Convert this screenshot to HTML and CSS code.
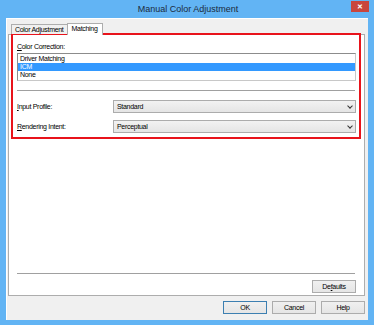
FILE: index.html
```html
<!DOCTYPE html>
<html lang="en">
<head>
    <meta charset="UTF-8">
    <title>Manual Color Adjustment</title>
    <link rel="stylesheet" href="styles.css">
</head>
<body>
    <div class="window">
        <div class="titlebar">
            <span class="title">Manual Color Adjustment</span>
            <span class="close">&#x2715;</span>
        </div>
        <div class="client">
            <div class="tabs">
                <div class="tab">Color Adjustment</div>
                <div class="tab active">Matching</div>
            </div>
            <div class="panel">
                <div class="label"><u>C</u>olor Correction:</div>
                <div class="listbox">
                    <div class="item">Driver Matching</div>
                    <div class="item selected">ICM</div>
                    <div class="item">None</div>
                </div>
                <div class="sep"></div>
                <div class="row">
                    <span class="row-label"><u>I</u>nput Profile:</span>
                    <div class="combo">Standard<span class="arrow"></span></div>
                </div>
                <div class="row">
                    <span class="row-label"><u>R</u>endering Intent:</span>
                    <div class="combo">Perceptual<span class="arrow"></span></div>
                </div>
                <div class="spacer"></div>
                <div class="sep"></div>
                <div class="panel-buttons">
                    <button class="btn">De<u>f</u>aults</button>
                </div>
                <div class="highlight"></div>
            </div>
            <div class="buttons">
                <button class="btn default">OK</button>
                <button class="btn">Cancel</button>
                <button class="btn">Help</button>
            </div>
        </div>
    </div>
</body>
</html>
```

FILE: styles.css
```css
body {
    margin: 0;
    font-family: 'Liberation Sans', Arial, sans-serif;
    font-size: 7px;
    letter-spacing: -0.3px;
    color: #000;
}
.window {
    width: 374px;
    height: 325px;
    box-sizing: border-box;
    background: #62b4f4;
    padding: 0 6px 5px 6px;
    display: flex;
    flex-direction: column;
}
.titlebar {
    height: 18px;
    position: relative;
    display: flex;
    justify-content: center;
    align-items: center;
}
.title {
    font-size: 9px;
    letter-spacing: 0;
    color: #1b2b3c;
    margin-left: 2px;
}
.close {
    position: absolute;
    right: -1px;
    top: 1px;
    width: 18px;
    height: 11px;
    background: #c9453d;
    color: #fff;
    font-size: 7px;
    font-weight: bold;
    line-height: 11px;
    text-align: center;
}
.client {
    flex: 1;
    background: #f0f0f0;
    border-left: 1px solid #fff;
    border-top: 1px solid #fff;
    padding: 3px 3px 0 1px;
    display: flex;
    flex-direction: column;
}
.tabs {
    display: flex;
    align-items: flex-end;
    padding-left: 3px;
    height: 12px;
    position: relative;
    z-index: 1;
}
.tab {
    border: 1px solid #adadad;
    border-bottom: none;
    background: #f0f0f0;
    height: 9px;
    line-height: 10px;
    padding: 0 3px;
    margin-right: -1px;
}
.tab.active {
    background: #fff;
    height: 11px;
    line-height: 10px;
    padding: 0 4px;
    margin-bottom: -1px;
}
.panel {
    flex: 1;
    background: #fff;
    border: 1px solid #adadad;
    padding: 7px 8px 2px 8px;
    display: flex;
    flex-direction: column;
    position: relative;
}
.label {
    height: 9px;
    line-height: 9px;
}
.listbox {
    margin-top: 2px;
    border: 1px solid #8c8c8c;
    border-right-color: #c8c8c8;
    border-bottom-color: #c8c8c8;
    padding: 1px 0;
}
.item {
    height: 8px;
    line-height: 8px;
    padding-left: 2px;
}
.item.selected {
    background: #3399ff;
    color: #fff;
}
.sep {
    height: 0;
    border-top: 1px solid #a0a0a0;
    margin-top: 9px;
    margin-right: 1px;
}
.row {
    display: flex;
    align-items: center;
    margin-top: 9px;
}
.row + .row {
    margin-top: 7px;
}
.row-label {
    width: 96px;
}
.combo {
    flex: 1;
    height: 11px;
    line-height: 11px;
    border: 1px solid #acacac;
    background: linear-gradient(#f2f2f2, #e5e5e5);
    padding-left: 3px;
    position: relative;
}
.arrow {
    position: absolute;
    right: 3px;
    top: 3px;
    width: 3px;
    height: 3px;
    border-right: 1px solid #333;
    border-bottom: 1px solid #333;
    transform: rotate(45deg);
}
.spacer {
    flex: 1;
}
.panel-buttons {
    display: flex;
    justify-content: flex-end;
    margin-top: 6px;
}
.btn {
    font-family: inherit;
    font-size: 7px;
    letter-spacing: -0.3px;
    height: 13px;
    width: 44px;
    padding: 0;
    border: 1px solid #acacac;
    background: linear-gradient(#f0f0f0, #e5e5e5);
    line-height: 11px;
    color: #000;
}
.btn.default {
    border-color: #3c7fb1;
}
.buttons {
    display: flex;
    justify-content: flex-end;
    gap: 5px;
    padding: 5px 0 6px 0;
}
.highlight {
    position: absolute;
    left: 2px;
    right: 3px;
    top: -2px;
    height: 102px;
    border: 2px solid #e8131b;
}
```
